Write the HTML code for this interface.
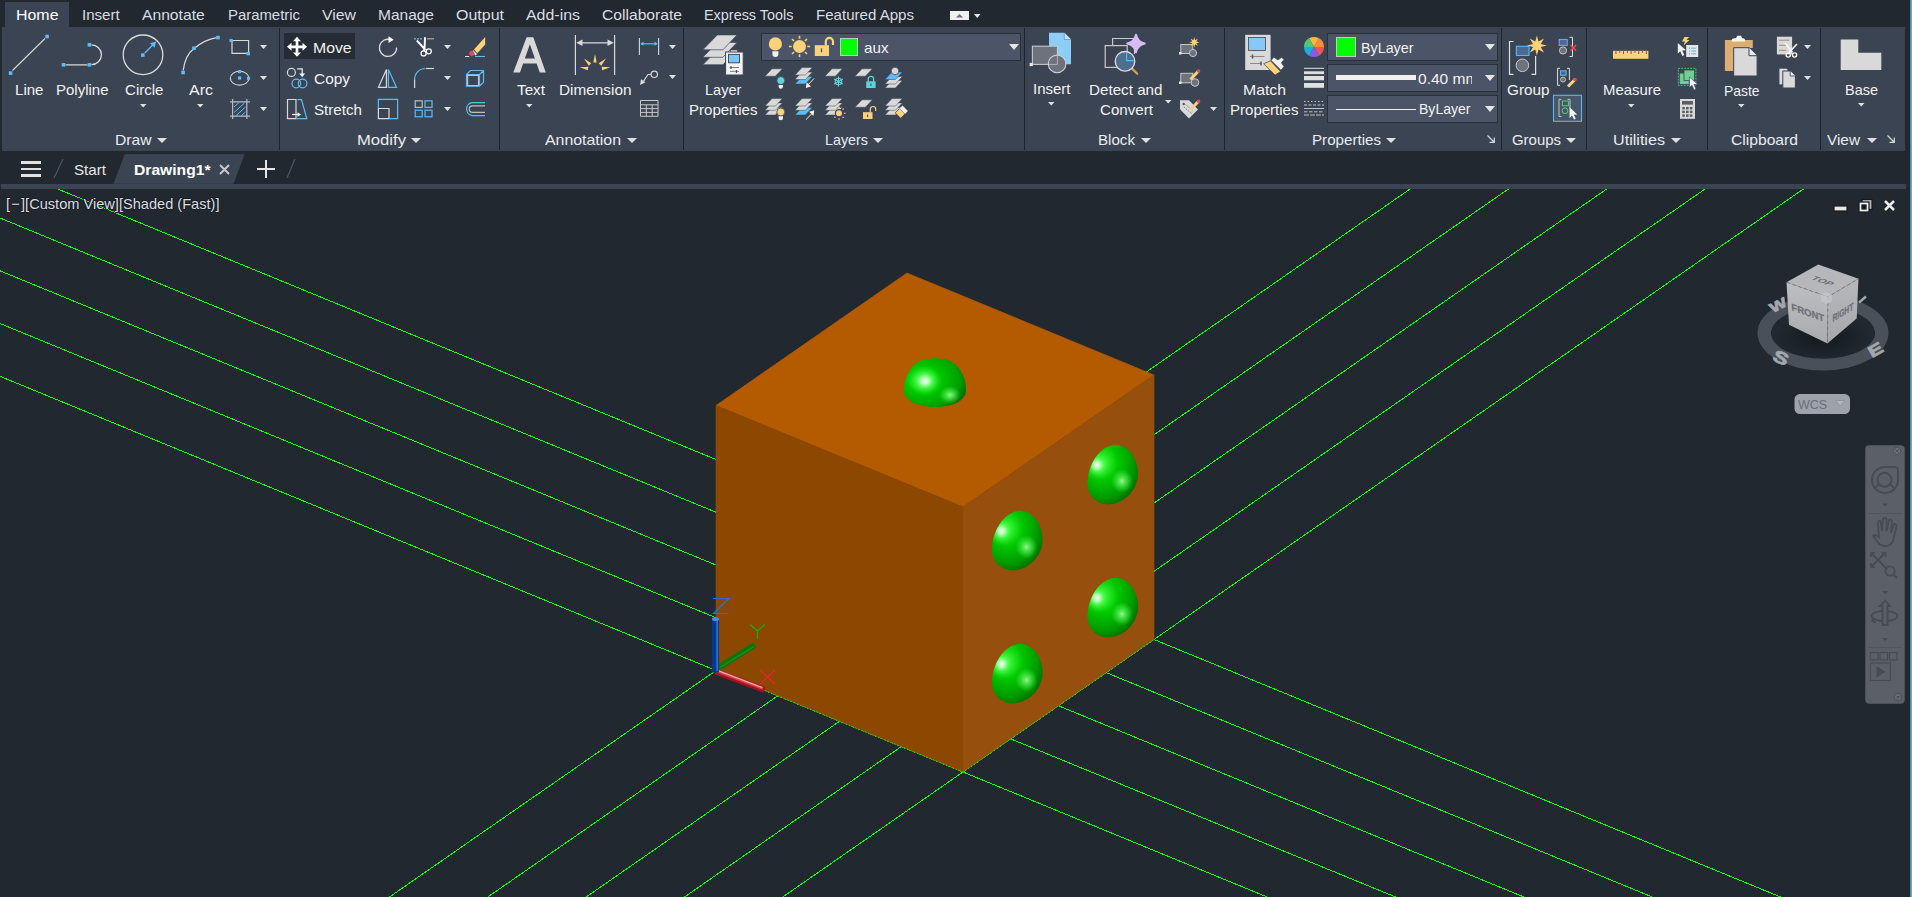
<!DOCTYPE html>
<html><head><meta charset="utf-8"><style>
html,body{margin:0;padding:0;}
body{width:1912px;height:897px;background:#212830;position:relative;overflow:hidden;font-family:"Liberation Sans", sans-serif;}
.t{position:absolute;white-space:nowrap;font-family:"Liberation Sans", sans-serif;transform-origin:0 0;}
svg{overflow:visible;}
</style></head><body>
<div style="position:absolute;left:5px;top:2px;width:64px;height:25px;background:#3b4453;"></div>
<div id="t1" class="t" style="left:16.0px;top:7.30px;font-size:15px;line-height:15px;color:#ffffff;font-weight:normal;transform:scaleX(1.0621);">Home</div>
<div id="t2" class="t" style="left:81.5px;top:7.30px;font-size:15px;line-height:15px;color:#dadde2;font-weight:normal;transform:scaleX(1.0049);">Insert</div>
<div id="t3" class="t" style="left:141.8px;top:7.30px;font-size:15px;line-height:15px;color:#dadde2;font-weight:normal;transform:scaleX(1.0439);">Annotate</div>
<div id="t4" class="t" style="left:227.5px;top:7.30px;font-size:15px;line-height:15px;color:#dadde2;font-weight:normal;transform:scaleX(0.9927);">Parametric</div>
<div id="t5" class="t" style="left:321.5px;top:7.30px;font-size:15px;line-height:15px;color:#dadde2;font-weight:normal;transform:scaleX(1.0543);">View</div>
<div id="t6" class="t" style="left:377.5px;top:7.30px;font-size:15px;line-height:15px;color:#dadde2;font-weight:normal;transform:scaleX(1.0329);">Manage</div>
<div id="t7" class="t" style="left:455.5px;top:7.30px;font-size:15px;line-height:15px;color:#dadde2;font-weight:normal;transform:scaleX(1.0659);">Output</div>
<div id="t8" class="t" style="left:525.5px;top:7.30px;font-size:15px;line-height:15px;color:#dadde2;font-weight:normal;transform:scaleX(1.0618);">Add-ins</div>
<div id="t9" class="t" style="left:601.5px;top:7.30px;font-size:15px;line-height:15px;color:#dadde2;font-weight:normal;transform:scaleX(1.0428);">Collaborate</div>
<div id="t10" class="t" style="left:704.0px;top:7.30px;font-size:15px;line-height:15px;color:#dadde2;font-weight:normal;transform:scaleX(0.9612);">Express Tools</div>
<div id="t11" class="t" style="left:815.5px;top:7.30px;font-size:15px;line-height:15px;color:#dadde2;font-weight:normal;transform:scaleX(1.0043);">Featured Apps</div>
<div style="position:absolute;left:950px;top:11px;width:19px;height:9px;background:#f0f0f0;"></div>
<svg style="position:absolute;left:954px;top:12px;" width="11" height="7" viewBox="0 0 11 7"><path d="M2 5.5L5.5 2L9 5.5Z" fill="#6a6e74"/></svg>
<svg style="position:absolute;left:973.75px;top:13.5px;" width="6.5" height="4" viewBox="0 0 6.5 4"><path d="M0 0H6.5L3.25 4Z" fill="#e6e6e6"/></svg>
<div style="position:absolute;left:2px;top:27px;width:1903px;height:124px;background:#3b4453;"></div>
<div style="position:absolute;left:279px;top:28px;width:1px;height:122px;background:#20252d;"></div>
<div style="position:absolute;left:499px;top:28px;width:1px;height:122px;background:#20252d;"></div>
<div style="position:absolute;left:683px;top:28px;width:1px;height:122px;background:#20252d;"></div>
<div style="position:absolute;left:1024px;top:28px;width:1px;height:122px;background:#20252d;"></div>
<div style="position:absolute;left:1224px;top:28px;width:1px;height:122px;background:#20252d;"></div>
<div style="position:absolute;left:1501px;top:28px;width:1px;height:122px;background:#20252d;"></div>
<div style="position:absolute;left:1586px;top:28px;width:1px;height:122px;background:#20252d;"></div>
<div style="position:absolute;left:1707px;top:28px;width:1px;height:122px;background:#20252d;"></div>
<div style="position:absolute;left:1820px;top:28px;width:1px;height:122px;background:#20252d;"></div>
<div id="t12" class="t" style="left:115.0px;top:132.30px;font-size:15px;line-height:15px;color:#e9ebee;font-weight:normal;transform:scaleX(1.0424);">Draw</div>
<svg style="position:absolute;left:157.0px;top:137.5px;" width="10" height="5" viewBox="0 0 10 5"><path d="M0 0H10L5.0 5Z" fill="#e0e0e0"/></svg>
<div id="t13" class="t" style="left:356.5px;top:132.30px;font-size:15px;line-height:15px;color:#e9ebee;font-weight:normal;transform:scaleX(1.1089);">Modify</div>
<svg style="position:absolute;left:411.0px;top:137.5px;" width="10" height="5" viewBox="0 0 10 5"><path d="M0 0H10L5.0 5Z" fill="#e0e0e0"/></svg>
<div id="t14" class="t" style="left:544.5px;top:132.30px;font-size:15px;line-height:15px;color:#e9ebee;font-weight:normal;transform:scaleX(1.0595);">Annotation</div>
<svg style="position:absolute;left:627.0px;top:137.5px;" width="10" height="5" viewBox="0 0 10 5"><path d="M0 0H10L5.0 5Z" fill="#e0e0e0"/></svg>
<div id="t15" class="t" style="left:824.5px;top:132.30px;font-size:15px;line-height:15px;color:#e9ebee;font-weight:normal;transform:scaleX(0.9549);">Layers</div>
<svg style="position:absolute;left:873.0px;top:137.5px;" width="10" height="5" viewBox="0 0 10 5"><path d="M0 0H10L5.0 5Z" fill="#e0e0e0"/></svg>
<div id="t16" class="t" style="left:1097.5px;top:132.30px;font-size:15px;line-height:15px;color:#e9ebee;font-weight:normal;transform:scaleX(1.0085);">Block</div>
<svg style="position:absolute;left:1141.0px;top:137.5px;" width="10" height="5" viewBox="0 0 10 5"><path d="M0 0H10L5.0 5Z" fill="#e0e0e0"/></svg>
<div id="t17" class="t" style="left:1311.5px;top:132.30px;font-size:15px;line-height:15px;color:#e9ebee;font-weight:normal;transform:scaleX(1.0091);">Properties</div>
<svg style="position:absolute;left:1386.0px;top:137.5px;" width="10" height="5" viewBox="0 0 10 5"><path d="M0 0H10L5.0 5Z" fill="#e0e0e0"/></svg>
<div id="t18" class="t" style="left:1511.5px;top:132.30px;font-size:15px;line-height:15px;color:#e9ebee;font-weight:normal;transform:scaleX(0.9959);">Groups</div>
<svg style="position:absolute;left:1566.0px;top:137.5px;" width="10" height="5" viewBox="0 0 10 5"><path d="M0 0H10L5.0 5Z" fill="#e0e0e0"/></svg>
<div id="t19" class="t" style="left:1612.5px;top:132.30px;font-size:15px;line-height:15px;color:#e9ebee;font-weight:normal;transform:scaleX(1.0756);">Utilities</div>
<svg style="position:absolute;left:1671.0px;top:137.5px;" width="10" height="5" viewBox="0 0 10 5"><path d="M0 0H10L5.0 5Z" fill="#e0e0e0"/></svg>
<div id="t20" class="t" style="left:1730.5px;top:132.30px;font-size:15px;line-height:15px;color:#e9ebee;font-weight:normal;transform:scaleX(1.0433);">Clipboard</div>
<div id="t21" class="t" style="left:1826.5px;top:132.30px;font-size:15px;line-height:15px;color:#e9ebee;font-weight:normal;transform:scaleX(1.0233);">View</div>
<svg style="position:absolute;left:1867.0px;top:137.5px;" width="10" height="5" viewBox="0 0 10 5"><path d="M0 0H10L5.0 5Z" fill="#e0e0e0"/></svg>
<div style="position:absolute;left:284px;top:33px;width:71px;height:26px;background:#262c36;"></div>
<div id="t22" class="t" style="left:15.0px;top:82.30px;font-size:15px;line-height:15px;color:#f2f2f2;font-weight:normal;transform:scaleX(1.0050);">Line</div>
<div id="t23" class="t" style="left:56.0px;top:82.30px;font-size:15px;line-height:15px;color:#f2f2f2;font-weight:normal;transform:scaleX(0.9994);">Polyline</div>
<div id="t24" class="t" style="left:125.0px;top:82.30px;font-size:15px;line-height:15px;color:#f2f2f2;font-weight:normal;transform:scaleX(1.0041);">Circle</div>
<div id="t25" class="t" style="left:188.5px;top:82.30px;font-size:15px;line-height:15px;color:#f2f2f2;font-weight:normal;transform:scaleX(1.0667);">Arc</div>
<div id="t26" class="t" style="left:312.9px;top:40.30px;font-size:15px;line-height:15px;color:#f2f2f2;font-weight:normal;transform:scaleX(1.0521);">Move</div>
<div id="t27" class="t" style="left:313.5px;top:71.30px;font-size:15px;line-height:15px;color:#f2f2f2;font-weight:normal;transform:scaleX(1.0277);">Copy</div>
<div id="t28" class="t" style="left:313.5px;top:102.30px;font-size:15px;line-height:15px;color:#f2f2f2;font-weight:normal;transform:scaleX(1.0099);">Stretch</div>
<div id="t29" class="t" style="left:516.5px;top:82.30px;font-size:15px;line-height:15px;color:#f2f2f2;font-weight:normal;transform:scaleX(1.0176);">Text</div>
<div id="t30" class="t" style="left:559.0px;top:82.30px;font-size:15px;line-height:15px;color:#f2f2f2;font-weight:normal;transform:scaleX(1.0229);">Dimension</div>
<div id="t31" class="t" style="left:705.1px;top:82.30px;font-size:15px;line-height:15px;color:#f2f2f2;font-weight:normal;transform:scaleX(0.9699);">Layer</div>
<div id="t32" class="t" style="left:689.0px;top:102.30px;font-size:15px;line-height:15px;color:#f2f2f2;font-weight:normal;transform:scaleX(1.0018);">Properties</div>
<div id="t33" class="t" style="left:1033.0px;top:81.30px;font-size:15px;line-height:15px;color:#f2f2f2;font-weight:normal;transform:scaleX(0.9996);">Insert</div>
<div id="t34" class="t" style="left:1089.0px;top:82.30px;font-size:15px;line-height:15px;color:#f2f2f2;font-weight:normal;transform:scaleX(1.0131);">Detect and</div>
<div id="t35" class="t" style="left:1099.5px;top:102.30px;font-size:15px;line-height:15px;color:#f2f2f2;font-weight:normal;transform:scaleX(1.0089);">Convert</div>
<div id="t36" class="t" style="left:1242.5px;top:82.30px;font-size:15px;line-height:15px;color:#f2f2f2;font-weight:normal;transform:scaleX(1.0524);">Match</div>
<div id="t37" class="t" style="left:1230.0px;top:102.30px;font-size:15px;line-height:15px;color:#f2f2f2;font-weight:normal;transform:scaleX(1.0018);">Properties</div>
<div id="t38" class="t" style="left:1507.0px;top:82.30px;font-size:15px;line-height:15px;color:#f2f2f2;font-weight:normal;transform:scaleX(1.0191);">Group</div>
<div id="t39" class="t" style="left:1602.5px;top:82.30px;font-size:15px;line-height:15px;color:#f2f2f2;font-weight:normal;transform:scaleX(0.9938);">Measure</div>
<div id="t40" class="t" style="left:1724.0px;top:83.30px;font-size:15px;line-height:15px;color:#f2f2f2;font-weight:normal;transform:scaleX(0.9255);">Paste</div>
<div id="t41" class="t" style="left:1844.5px;top:82.30px;font-size:15px;line-height:15px;color:#f2f2f2;font-weight:normal;transform:scaleX(0.9648);">Base</div>
<svg style="position:absolute;left:139.75px;top:104.2px;" width="6.5" height="3.6" viewBox="0 0 6.5 3.6"><path d="M0 0H6.5L3.25 3.6Z" fill="#e0e0e0"/></svg>
<svg style="position:absolute;left:196.75px;top:104.2px;" width="6.5" height="3.6" viewBox="0 0 6.5 3.6"><path d="M0 0H6.5L3.25 3.6Z" fill="#e0e0e0"/></svg>
<svg style="position:absolute;left:525.75px;top:104.2px;" width="6.5" height="3.6" viewBox="0 0 6.5 3.6"><path d="M0 0H6.5L3.25 3.6Z" fill="#e0e0e0"/></svg>
<svg style="position:absolute;left:1047.75px;top:102.2px;" width="6.5" height="3.6" viewBox="0 0 6.5 3.6"><path d="M0 0H6.5L3.25 3.6Z" fill="#e0e0e0"/></svg>
<svg style="position:absolute;left:1164.75px;top:100.2px;" width="6.5" height="3.6" viewBox="0 0 6.5 3.6"><path d="M0 0H6.5L3.25 3.6Z" fill="#e0e0e0"/></svg>
<svg style="position:absolute;left:1627.75px;top:104.2px;" width="6.5" height="3.6" viewBox="0 0 6.5 3.6"><path d="M0 0H6.5L3.25 3.6Z" fill="#e0e0e0"/></svg>
<svg style="position:absolute;left:1737.75px;top:104.2px;" width="6.5" height="3.6" viewBox="0 0 6.5 3.6"><path d="M0 0H6.5L3.25 3.6Z" fill="#e0e0e0"/></svg>
<svg style="position:absolute;left:1857.75px;top:103.2px;" width="6.5" height="3.6" viewBox="0 0 6.5 3.6"><path d="M0 0H6.5L3.25 3.6Z" fill="#e0e0e0"/></svg>
<svg style="position:absolute;left:259.5px;top:45.0px;" width="7" height="4" viewBox="0 0 7 4"><path d="M0 0H7L3.5 4Z" fill="#e0e0e0"/></svg>
<svg style="position:absolute;left:259.5px;top:76.0px;" width="7" height="4" viewBox="0 0 7 4"><path d="M0 0H7L3.5 4Z" fill="#e0e0e0"/></svg>
<svg style="position:absolute;left:259.5px;top:107.0px;" width="7" height="4" viewBox="0 0 7 4"><path d="M0 0H7L3.5 4Z" fill="#e0e0e0"/></svg>
<svg style="position:absolute;left:443.5px;top:45.0px;" width="7" height="4" viewBox="0 0 7 4"><path d="M0 0H7L3.5 4Z" fill="#e0e0e0"/></svg>
<svg style="position:absolute;left:443.5px;top:76.0px;" width="7" height="4" viewBox="0 0 7 4"><path d="M0 0H7L3.5 4Z" fill="#e0e0e0"/></svg>
<svg style="position:absolute;left:443.5px;top:107.0px;" width="7" height="4" viewBox="0 0 7 4"><path d="M0 0H7L3.5 4Z" fill="#e0e0e0"/></svg>
<svg style="position:absolute;left:668.5px;top:45.0px;" width="7" height="4" viewBox="0 0 7 4"><path d="M0 0H7L3.5 4Z" fill="#e0e0e0"/></svg>
<svg style="position:absolute;left:668.5px;top:75.0px;" width="7" height="4" viewBox="0 0 7 4"><path d="M0 0H7L3.5 4Z" fill="#e0e0e0"/></svg>
<svg style="position:absolute;left:1209.5px;top:107.0px;" width="7" height="4" viewBox="0 0 7 4"><path d="M0 0H7L3.5 4Z" fill="#e0e0e0"/></svg>
<svg style="position:absolute;left:1803.5px;top:45.0px;" width="7" height="4" viewBox="0 0 7 4"><path d="M0 0H7L3.5 4Z" fill="#e0e0e0"/></svg>
<svg style="position:absolute;left:1803.5px;top:76.0px;" width="7" height="4" viewBox="0 0 7 4"><path d="M0 0H7L3.5 4Z" fill="#e0e0e0"/></svg>
<div style="position:absolute;left:761px;top:33px;width:258px;height:26px;background:#4b5567;border:1px solid #2a303a;"></div>
<svg style="position:absolute;left:1009.0px;top:44.0px;" width="10" height="6" viewBox="0 0 10 6"><path d="M0 0H10L5.0 6Z" fill="#e6e6e6"/></svg>
<div style="position:absolute;left:841px;top:39px;width:16px;height:16px;background:#00ff00;outline:1px solid #c8c8c8;"></div>
<div id="t42" class="t" style="left:864.0px;top:39.80px;font-size:15px;line-height:15px;color:#f2f2f2;font-weight:normal;transform:scaleX(1.0129);">aux</div>
<div style="position:absolute;left:1327px;top:33px;width:169px;height:26px;background:#4b5567;border:1px solid #2a303a;"></div>
<div style="position:absolute;left:1327px;top:64px;width:169px;height:26px;background:#4b5567;border:1px solid #2a303a;"></div>
<div style="position:absolute;left:1327px;top:95px;width:169px;height:26px;background:#4b5567;border:1px solid #2a303a;"></div>
<svg style="position:absolute;left:1485.0px;top:44.0px;" width="10" height="6" viewBox="0 0 10 6"><path d="M0 0H10L5.0 6Z" fill="#e6e6e6"/></svg>
<svg style="position:absolute;left:1485.0px;top:75.0px;" width="10" height="6" viewBox="0 0 10 6"><path d="M0 0H10L5.0 6Z" fill="#e6e6e6"/></svg>
<svg style="position:absolute;left:1485.0px;top:106.0px;" width="10" height="6" viewBox="0 0 10 6"><path d="M0 0H10L5.0 6Z" fill="#e6e6e6"/></svg>
<div style="position:absolute;left:1337px;top:38px;width:18px;height:18px;background:#00ff00;outline:1px solid #c8c8c8;"></div>
<div id="t43" class="t" style="left:1361.0px;top:39.80px;font-size:15px;line-height:15px;color:#f2f2f2;font-weight:normal;transform:scaleX(0.9540);">ByLayer</div>
<div style="position:absolute;left:1336px;top:75px;width:80px;height:5px;background:#f0f0f0;"></div>
<div style="position:absolute;left:1417px;top:64px;width:55px;height:28px;overflow:hidden">
<div id="t44" class="t" style="left:1.0px;top:6.80px;font-size:15px;line-height:15px;color:#f2f2f2;font-weight:normal;transform:scaleX(1.0367);">0.40 mm</div>
</div>
<div style="position:absolute;left:1336px;top:109px;width:80px;height:1px;background:#f0f0f0;"></div>
<div id="t45" class="t" style="left:1419.0px;top:101.30px;font-size:15px;line-height:15px;color:#f2f2f2;font-weight:normal;transform:scaleX(0.9358);">ByLayer</div>
<svg style="position:absolute;left:0px;top:0px;" width="1912" height="151" viewBox="0 0 1912 151"><path d="M12.5 70.5L45 38.5" stroke="#d9d9d9" stroke-width="1.1" fill="none"/><rect x="8.80" y="71.30" width="3.6" height="3.6" fill="#5ebcf4"/><rect x="45.30" y="34.70" width="3.6" height="3.6" fill="#5ebcf4"/><path d="M65.5 64.8H87.5M91.5 44.8A9.9 9.9 0 0 1 91.5 64.6" stroke="#d9d9d9" stroke-width="1.3" fill="none"/><rect x="61.70" y="63.00" width="3.6" height="3.6" fill="#5ebcf4"/><rect x="87.60" y="63.00" width="3.6" height="3.6" fill="#5ebcf4"/><rect x="87.60" y="43.00" width="3.6" height="3.6" fill="#5ebcf4"/><circle cx="143" cy="54.8" r="19.8" stroke="#d9d9d9" stroke-width="1.3" fill="none"/><rect x="141.00" y="53.30" width="3.6" height="3.6" fill="#5ebcf4"/><path d="M144.8 53L152.5 45.3" stroke="#5ebcf4" stroke-width="1.3"/><path d="M156.2 41.5L150 43.2L154.5 47.7Z" fill="#5ebcf4"/><path d="M183.2 70.5C184.5 60 188 53 194 48.5C200 43.5 208 39 216.5 37.6" stroke="#d9d9d9" stroke-width="1.3" fill="none"/><rect x="181.30" y="70.70" width="3.6" height="3.6" fill="#5ebcf4"/><rect x="192.20" y="46.50" width="3.6" height="3.6" fill="#5ebcf4"/><rect x="216.20" y="35.80" width="3.6" height="3.6" fill="#5ebcf4"/><path d="M232 40.5H248.6V53.4H232Z" stroke="#d9d9d9" stroke-width="1.2" fill="none"/><rect x="229.50" y="38.90" width="3.2" height="3.2" fill="#5ebcf4"/><rect x="246.60" y="51.90" width="3.4" height="3.4" fill="#5ebcf4"/><ellipse cx="239.6" cy="78.2" rx="9.3" ry="6.9" stroke="#d9d9d9" stroke-width="1.1" fill="none"/><rect x="238.00" y="70.00" width="3.2" height="3.2" fill="#5ebcf4"/><rect x="238.00" y="76.40" width="3.2" height="3.2" fill="#5ebcf4"/><rect x="246.90" y="76.70" width="3.2" height="3.2" fill="#5ebcf4"/><path d="M232.6 99V119M246.8 99V119M230 101.8H250M230 116.2H250" stroke="#b8bcc2" stroke-width="1.2" fill="none"/><path d="M234 107L239 102.5M234 112.5L244.5 103M235.5 116L245.5 107M241 116L245.5 112" stroke="#5ebcf4" stroke-width="1" fill="none"/><path d="M297 36.8L301 41.2H298.3V45.5H302.5V42.8L307 46.8L302.5 50.8V48.2H298.3V52.4H301L297 56.8L293 52.4H295.7V48.2H291.5V50.8L287 46.8L291.5 42.8V45.5H295.7V41.2H293Z" fill="#ffffff"/><circle cx="291.4" cy="72.4" r="4" stroke="#d9d9d9" stroke-width="1.2" fill="none"/><path d="M297.2 68.8H302.2V74" stroke="#e8e8e8" stroke-width="1.3" fill="none"/><path d="M299.3 73.5H305.1L302.2 77.2Z" fill="#ffffff"/><circle cx="296.3" cy="83.5" r="4.3" stroke="#5ebcf4" stroke-width="1.2" fill="none"/><circle cx="302.6" cy="83.5" r="4.3" stroke="#5ebcf4" stroke-width="1.2" fill="none"/><path d="M287.5 99.5H296V118.6H287.5Z" stroke="#d9d9d9" stroke-width="1.2" fill="none"/><path d="M297.5 99.6H301.5L306.8 118.6H296.5" stroke="#5ebcf4" stroke-width="1.2" fill="none"/><path d="M292 114.5H298.5" stroke="#e8e8e8" stroke-width="1.2"/><path d="M297.5 112.2L301 114.5L297.5 116.8Z" fill="#ffffff"/><path d="M391 39.8A8.6 8.6 0 1 0 396.6 47.5" stroke="#d9d9d9" stroke-width="1.3" fill="none"/><path d="M388.5 36.3L393.7 39.7L388.5 42.9Z" fill="#ffffff"/><path d="M414 38.8H422.5" stroke="#5ebcf4" stroke-width="1.2" stroke-dasharray="2 1"/><path d="M427 38.8H434" stroke="#a8a8a8" stroke-width="1.2"/><path d="M416.8 40.5L425.5 49.8M425 37.3L424.6 47.5L423.8 51" stroke="#ffffff" stroke-width="1.9" fill="none"/><circle cx="423.6" cy="53.4" r="2.5" stroke="#ffffff" stroke-width="1.3" fill="none"/><circle cx="428.8" cy="51.3" r="2.5" stroke="#ffffff" stroke-width="1.3" fill="none"/><path d="M474 49.5L485.2 37V44.5L477.3 53.2Z" fill="#f9d27a"/><path d="M472.5 51L476.2 54.8" stroke="#ffffff" stroke-width="2"/><circle cx="471.8" cy="53.3" r="2.6" fill="#e8495a"/><path d="M465 56.5H469.2" stroke="#e8e8e8" stroke-width="1"/><path d="M475 56.5H485" stroke="#5ebcf4" stroke-width="1.1"/><path d="M378.5 87.3L386.4 69.5V87.3Z" stroke="#d9d9d9" stroke-width="1.2" fill="none"/><path d="M388.4 69.5L396.5 87.3H388.4Z" stroke="#5ebcf4" stroke-width="1.2" fill="none"/><path d="M414.6 88V79.5" stroke="#d9d9d9" stroke-width="1.2" fill="none"/><path d="M414.6 80A11 11 0 0 1 425.5 68.5" stroke="#5ebcf4" stroke-width="1.2" fill="none"/><path d="M426 68.5H434" stroke="#d9d9d9" stroke-width="1.2"/><path d="M466.5 86.2V74.5L470.5 70.5H483.5V82.2L479.5 86.2Z M466.5 74.5H479.5V86.2 M479.5 74.5L483.5 70.5" stroke="#5ebcf4" stroke-width="1.2" fill="none"/><path d="M467.6 75.3H478.5V85.6H467.6Z" stroke="#bfbfbf" stroke-width="1.2" fill="none"/><path d="M378.4 108V99.4H397.6V118.6H389.5" stroke="#5ebcf4" stroke-width="1.2" fill="none"/><path d="M378.4 108.5H389V118.6H378.4Z" stroke="#d9d9d9" stroke-width="1.2" fill="none"/><rect x="415.2" y="100.8" width="7" height="6.6" stroke="#bfbfbf" stroke-width="1.2" fill="none"/><rect x="425" y="100.8" width="7" height="6.6" stroke="#5ebcf4" stroke-width="1.2" fill="none"/><rect x="415.2" y="110.2" width="7" height="6.6" stroke="#5ebcf4" stroke-width="1.2" fill="none"/><rect x="425" y="110.2" width="7" height="6.6" stroke="#5ebcf4" stroke-width="1.2" fill="none"/><path d="M485 102.6H472A6.6 6.6 0 0 0 472 115.6H485" stroke="#5ebcf4" stroke-width="1.2" fill="none"/><path d="M485 105.8H472.5A3.3 3.3 0 0 0 472.5 112.4H485" stroke="#bfbfbf" stroke-width="1.2" fill="none"/><path fill-rule="evenodd" d="M513.3 72.4L526.6 37.2H533.3L545.8 72.4H539.8L536.6 63.4H523.1L520 72.4Z M524.8 58.5H534.9L529.9 44.2Z" fill="#d9d9d9"/><path d="M575.4 35V75M614.6 35V75M580 42.8H610" stroke="#d9d9d9" stroke-width="1.2" fill="none"/><path d="M576.2 42.8L582.5 39.6V46Z M613.8 42.8L607.5 39.6V46Z" fill="#d9d9d9"/><path d="M595.00 54.00L596.70 62.50L593.30 62.50Z" fill="#f9d27a"/><path d="M584.04 58.54L591.25 63.35L588.85 65.75Z" fill="#f9d27a"/><path d="M605.96 58.54L601.15 65.75L598.75 63.35Z" fill="#f9d27a"/><path d="M579.65 67.34L588.30 66.84L587.83 70.21Z" fill="#f9d27a"/><path d="M610.35 67.34L602.17 70.21L601.70 66.84Z" fill="#f9d27a"/><path d="M639.4 38V55M658.6 38V55" stroke="#d9d9d9" stroke-width="1.1"/><path d="M641 43.8H657" stroke="#5ebcf4" stroke-width="1.2"/><path d="M640.2 43.8L643.5 41.8V45.8Z M657.8 43.8L654.5 41.8V45.8Z" fill="#5ebcf4"/><circle cx="654.3" cy="74.3" r="3.2" stroke="#d9d9d9" stroke-width="1.2" fill="none"/><path d="M651 74.5H648L643 82" stroke="#d9d9d9" stroke-width="1.2" fill="none"/><path d="M640 85L641 79.2L645.5 82.2Z" fill="#d9d9d9"/><path d="M640.5 100.5H658V116.3H640.5Z M640.5 104.8H658 M640.5 108.6H658 M640.5 112.4H658 M646.3 104.8V116.3 M652.2 104.8V116.3" stroke="#c8c8c8" stroke-width="1" fill="none"/><path d="M702.8 64.8L717.3 49.9H737.1L722.9 64.8Z" fill="#d9d9d9" stroke="#3b4453" stroke-width="0.7"/><path d="M702.8 57.3L717.3 42.4H737.1L722.9 57.3Z" fill="#d9d9d9" stroke="#3b4453" stroke-width="0.7"/><path d="M702.8 49.8L717.3 34.9H737.1L722.9 49.8Z" fill="#d9d9d9" stroke="#3b4453" stroke-width="0.7"/><rect x="730.5" y="50" width="7" height="3" fill="#e8e8e8" stroke="#3b4453" stroke-width="0.6"/><rect x="725.6" y="52" width="17.6" height="23" fill="#f2f2f2" stroke="#3b4453" stroke-width="1"/><rect x="728.5" y="54.4" width="11" height="8.4" fill="#7cc4fb" stroke="#3a404a" stroke-width="0.9"/><path d="M729.5 67.5H739M730 71.4H739" stroke="#707070" stroke-width="0.9"/><path d="M731 66V69M736.5 70V73" stroke="#505050" stroke-width="1.2"/><circle cx="775.4" cy="43.9" r="6.6" fill="#f9d27a"/><path d="M772.4 51.2H778.4V54A3 3 0 0 1 772.4 54Z" fill="#f0f0f0"/><circle cx="799.5" cy="46.5" r="6.5" fill="#f9d27a"/><path d="M807.30 46.50L810.10 46.50" stroke="#f9d27a" stroke-width="1.6"/><path d="M805.02 52.02L807.00 54.00" stroke="#f9d27a" stroke-width="1.6"/><path d="M799.50 54.30L799.50 57.10" stroke="#f9d27a" stroke-width="1.6"/><path d="M793.98 52.02L792.00 54.00" stroke="#f9d27a" stroke-width="1.6"/><path d="M791.70 46.50L788.90 46.50" stroke="#f9d27a" stroke-width="1.6"/><path d="M793.98 40.98L792.00 39.00" stroke="#f9d27a" stroke-width="1.6"/><path d="M799.50 38.70L799.50 35.90" stroke="#f9d27a" stroke-width="1.6"/><path d="M805.02 40.98L807.00 39.00" stroke="#f9d27a" stroke-width="1.6"/><path d="M814.8 45.2H829V56H814.8Z" fill="#f9d27a"/><path d="M825.8 45.5V41.5A3.6 3.6 0 0 1 833 41.5V45" stroke="#f9d27a" stroke-width="2.2" fill="none"/><path d="M821.5 48.3V52.2" stroke="#4c576a" stroke-width="1.3"/><path d="M765 76.2L772 68.8H782.4L775.4 76.2Z" fill="#d9d9d9" stroke="#3b4453" stroke-width="0.5"/><circle cx="780.8" cy="80.6" r="4" fill="#5fd3dc" stroke="#3b4453" stroke-width="0.8"/><path d="M778.5999999999999 84.89999999999999H783.0V86.6A2.2 2.2 0 0 1 778.5999999999999 86.6Z" fill="#f0f0f0"/><path d="M795 84L802 76.6H812.4L805.4 84Z" fill="#5ebcf4" stroke="#3b4453" stroke-width="0.5"/><path d="M795 79.5L802 72.1H812.4L805.4 79.5Z" fill="#d9d9d9" stroke="#3b4453" stroke-width="0.5"/><path d="M795 75L802 67.6H812.4L805.4 75Z" fill="#d9d9d9" stroke="#3b4453" stroke-width="0.5"/><path d="M814 78.5L808.2 84.6" stroke="#f0f0f0" stroke-width="1"/><path d="M805.8 88L806.6 82.3L811 86.5Z" fill="#f0f0f0"/><path d="M825 76.2L832 68.8H842.4L835.4 76.2Z" fill="#d9d9d9" stroke="#3b4453" stroke-width="0.5"/><g stroke="#5fd3dc" stroke-width="1.1"><path d="M838.5 76.5V86.5M834.2 79L842.8 84M834.2 84L842.8 79"/><circle cx="838.5" cy="81.5" r="3.3" fill="none"/></g><path d="M855 76.2L862 68.8H872.4L865.4 76.2Z" fill="#d9d9d9" stroke="#3b4453" stroke-width="0.5"/><path d="M866.2 81.3H875.6V88H866.2Z" fill="#5fd3dc"/><path d="M868.2 81.5V79A2.7 2.7 0 0 1 873.6 79V81.5" stroke="#5fd3dc" stroke-width="1.3" fill="none"/><path d="M870.9 83.5V86" stroke="#3b4453" stroke-width="1"/><path d="M885 88L892 80.6H902.4L895.4 88Z" fill="#d9d9d9" stroke="#3b4453" stroke-width="0.5"/><path d="M885 84L892 76.6H902.4L895.4 84Z" fill="#d9d9d9" stroke="#3b4453" stroke-width="0.5"/><path d="M885 79.5L892 72.1H902.4L895.4 79.5Z" fill="#5ebcf4" stroke="#3b4453" stroke-width="0.5"/><circle cx="895" cy="71" r="3.8" fill="#d9d9d9" stroke="#3b4453" stroke-width="0.8"/><path d="M765 115L772 107.6H782.4L775.4 115Z" fill="#d9d9d9" stroke="#3b4453" stroke-width="0.5"/><path d="M765 110.3L772 102.89999999999999H782.4L775.4 110.3Z" fill="#d9d9d9" stroke="#3b4453" stroke-width="0.5"/><path d="M765 106L772 98.6H782.4L775.4 106Z" fill="#d9d9d9" stroke="#3b4453" stroke-width="0.5"/><circle cx="780.8" cy="112" r="4" fill="#f9d27a" stroke="#3b4453" stroke-width="0.8"/><path d="M778.5999999999999 116.3H783.0V118A2.2 2.2 0 0 1 778.5999999999999 118Z" fill="#f0f0f0"/><path d="M795 115L802 107.6H812.4L805.4 115Z" fill="#5ebcf4" stroke="#3b4453" stroke-width="0.5"/><path d="M795 110.3L802 102.89999999999999H812.4L805.4 110.3Z" fill="#d9d9d9" stroke="#3b4453" stroke-width="0.5"/><path d="M795 106L802 98.6H812.4L805.4 106Z" fill="#d9d9d9" stroke="#3b4453" stroke-width="0.5"/><path d="M806 119.5L812 113.6" stroke="#f0f0f0" stroke-width="1"/><path d="M814.3 110.3L813.5 116L809.1 111.8Z" fill="#f0f0f0"/><path d="M825 115L832 107.6H842.4L835.4 115Z" fill="#d9d9d9" stroke="#3b4453" stroke-width="0.5"/><path d="M825 110.3L832 102.89999999999999H842.4L835.4 110.3Z" fill="#d9d9d9" stroke="#3b4453" stroke-width="0.5"/><path d="M825 106L832 98.6H842.4L835.4 106Z" fill="#d9d9d9" stroke="#3b4453" stroke-width="0.5"/><circle cx="839" cy="113.2" r="3.6" fill="#f9d27a" stroke="#3b4453" stroke-width="1.2"/><circle cx="844.80" cy="113.20" r="0.8" fill="#f9d27a"/><circle cx="843.10" cy="117.30" r="0.8" fill="#f9d27a"/><circle cx="839.00" cy="119.00" r="0.8" fill="#f9d27a"/><circle cx="834.90" cy="117.30" r="0.8" fill="#f9d27a"/><circle cx="833.20" cy="113.20" r="0.8" fill="#f9d27a"/><circle cx="834.90" cy="109.10" r="0.8" fill="#f9d27a"/><circle cx="839.00" cy="107.40" r="0.8" fill="#f9d27a"/><circle cx="843.10" cy="109.10" r="0.8" fill="#f9d27a"/><path d="M855 107.2L862 99.8H872.4L865.4 107.2Z" fill="#d9d9d9" stroke="#3b4453" stroke-width="0.5"/><path d="M863 112.2H872.5V119H863Z" fill="#f9d27a"/><path d="M870.3 112.3V109.2A2.7 2.7 0 0 1 875.7 109.2V111" stroke="#f9d27a" stroke-width="1.2" fill="none"/><path d="M867.6 114.5V117" stroke="#3b4453" stroke-width="1"/><path d="M885 115L892 107.6H902.4L895.4 115Z" fill="#d9d9d9" stroke="#3b4453" stroke-width="0.5"/><path d="M885 110.3L892 102.89999999999999H902.4L895.4 110.3Z" fill="#d9d9d9" stroke="#3b4453" stroke-width="0.5"/><path d="M885 106L892 98.6H902.4L895.4 106Z" fill="#d9d9d9" stroke="#3b4453" stroke-width="0.5"/><path d="M895.2 112.8L899.5 108.5L905 114L900.7 118.3Z" fill="#f9d27a" stroke="#3b4453" stroke-width="0.8"/><path d="M899.5 108.5L902.5 105.5L907.8 111L905 114Z" fill="#f0f0f0"/><path d="M1049 32.8H1064.5L1071 39.3V64.2H1049Z" fill="#8bcdfb"/><path d="M1064.3 32.8V39.5H1071" fill="#c0e4fd" stroke="#5a7c98" stroke-width="0.6"/><rect x="1032.4" y="46.2" width="25" height="18.2" fill="#6d727d" stroke="#c8c8c8" stroke-width="1.1"/><circle cx="1057.1" cy="63.9" r="8.8" fill="#6d727d" stroke="#d0d0d0" stroke-width="1.1"/><path d="M1049 64.4H1057.4V55" stroke="#b8b8b8" stroke-width="0.9" fill="none"/><rect x="1029.6" y="62.9" width="3.2" height="3.2" fill="#e8e8e8"/><path d="M1112.6 54V38.5H1134.5V54" stroke="#c8c8c8" stroke-width="1.2" fill="none"/><rect x="1105.2" y="45.6" width="22" height="21.8" fill="#3d4250" stroke="#c8c8c8" stroke-width="1.2"/><path d="M1132 68.5L1137.2 73.8" stroke="#e0a050" stroke-width="2.2" stroke-linecap="round"/><circle cx="1125" cy="61.3" r="9.8" fill="#4e6e90" stroke="#e0e0e0" stroke-width="1.3"/><path d="M1126.6 52.2V60.6H1133.8" stroke="#5ab8f0" stroke-width="1.1" fill="none"/><path d="M1136 34.7Q1137.5 42 1144.8 43.5Q1137.5 45 1136 52.3Q1134.5 45 1127.2 43.5Q1134.5 42 1136 34.7Z" fill="#d8bbf2" stroke="#d8bbf2" stroke-width="2" stroke-linejoin="round"/><rect x="1180.8" y="44.5" width="12" height="9" fill="#6d727d" stroke="#c8c8c8" stroke-width="1"/><circle cx="1193" cy="53" r="3.6" fill="#6d727d" stroke="#c8c8c8" stroke-width="1"/><rect x="1179" y="52" width="2.5" height="2.5" fill="#e8e8e8"/><path d="M1194.30 37.10L1195.14 40.27L1197.98 38.62L1196.33 41.46L1199.50 42.30L1196.33 43.14L1197.98 45.98L1195.14 44.33L1194.30 47.50L1193.46 44.33L1190.62 45.98L1192.27 43.14L1189.10 42.30L1192.27 41.46L1190.62 38.62L1193.46 40.27Z" fill="#f9d27a"/><rect x="1180.8" y="73.3" width="12" height="9.5" fill="#6d727d" stroke="#c8c8c8" stroke-width="1"/><circle cx="1195" cy="82.5" r="3.8" fill="#6d727d" stroke="#c8c8c8" stroke-width="1"/><rect x="1179" y="81.5" width="2.5" height="2.5" fill="#e8e8e8"/><path d="M1190.5 79.5L1198.5 71" stroke="#f9d27a" stroke-width="3"/><circle cx="1198.5" cy="71" r="1.8" fill="#e8495a"/><path d="M1190.5 79.5L1191.0 77.0L1193.0 79.0Z" fill="#d0d0d0"/><path d="M1180 100.3H1189L1198 109.5L1189 118.5L1180 109.3Z" fill="#d9d9d9"/><circle cx="1183.7" cy="104" r="1.2" fill="#505560"/><path d="M1184 107L1192 114M1185.5 104.5L1193 111" stroke="#6a6f78" stroke-width="0.8" stroke-dasharray="1.5 1"/><path d="M1190.5 109.8L1198.5 101.3" stroke="#f9d27a" stroke-width="3"/><circle cx="1198.5" cy="101.3" r="1.8" fill="#e8495a"/><path d="M1190.5 109.8L1191.0 107.3L1193.0 109.3Z" fill="#d0d0d0"/><rect x="1245.2" y="34.8" width="25.4" height="35.2" fill="#d9d9d9"/><rect x="1248.5" y="37.5" width="17" height="13" fill="#86c8fa" stroke="#40464e" stroke-width="0.8"/><path d="M1250 56.5H1264.5M1250 63.5H1262" stroke="#8a8a8a" stroke-width="1"/><path d="M1252.5 54.5V58.5M1261 61.5V65.5" stroke="#5a5a5a" stroke-width="1.5"/><path d="M1271 60.3L1274 57.2L1278 60L1281.6 57.2L1284 59.7L1281.4 62.8L1284 66.6L1281 70.2Z" fill="#f0f0f0" stroke="#3b4453" stroke-width="0.7"/><path d="M1263.7 63.7L1270.5 60.8L1280.6 71.6L1275 75Z" fill="#f9d27a" stroke="#3b4453" stroke-width="0.7"/><path d="M1314 47L1309.00 38.34A10 10 0 0 1 1319.00 38.34Z" fill="#f9b83a"/><path d="M1314 47L1319.00 38.34A10 10 0 0 1 1324.00 47.00Z" fill="#f98b3a"/><path d="M1314 47L1324.00 47.00A10 10 0 0 1 1319.00 55.66Z" fill="#e8565a"/><path d="M1314 47L1319.00 55.66A10 10 0 0 1 1309.00 55.66Z" fill="#8a5af0"/><path d="M1314 47L1309.00 55.66A10 10 0 0 1 1304.00 47.00Z" fill="#1aaed8"/><path d="M1314 47L1304.00 47.00A10 10 0 0 1 1309.00 38.34Z" fill="#4ec878"/><path d="M1304 68.3H1324" stroke="#e0e0e0" stroke-width="1"/><rect x="1304" y="71.3" width="20" height="2.8" fill="#e0e0e0"/><rect x="1304" y="76" width="20" height="4.3" fill="#e0e0e0"/><rect x="1304" y="83" width="20" height="4.8" fill="#e0e0e0"/><g stroke="#d0d0d0" stroke-width="0.9"><path d="M1304 101.5H1324" stroke-dasharray="1.5 2"/><path d="M1304 105H1324" stroke-dasharray="3 1.5"/><path d="M1304 108.5H1324"/><path d="M1304 111.8H1324" stroke-dasharray="3.5 1.5"/><path d="M1304 115H1324" stroke-dasharray="5 1"/></g><path d="M1513.5 41.5H1509.5V74.3H1513.5M1531.5 74.3H1535.6V56" stroke="#e0e0e0" stroke-width="1.2" fill="none"/><rect x="1516.4" y="46.3" width="12.6" height="9.2" fill="#4a6a90" stroke="#5ab8f0" stroke-width="1.1"/><circle cx="1522.4" cy="65.3" r="6.3" fill="#6d727d" stroke="#c8c8c8" stroke-width="1"/><path d="M1536.90 35.50L1538.51 41.62L1543.97 38.43L1540.78 43.89L1546.90 45.50L1540.78 47.11L1543.97 52.57L1538.51 49.38L1536.90 55.50L1535.29 49.38L1529.83 52.57L1533.02 47.11L1526.90 45.50L1533.02 43.89L1529.83 38.43L1535.29 41.62Z" fill="#f9d27a"/><path d="M1569.5 37.3H1572.5V56.5H1569.5" stroke="#e0e0e0" stroke-width="1" fill="none"/><rect x="1559.2" y="39.4" width="8" height="6" fill="#4a6a90" stroke="#5ab8f0" stroke-width="1"/><circle cx="1563" cy="50.5" r="3.6" fill="#6d727d" stroke="#c8c8c8" stroke-width="1"/><path d="M1570.6 45L1576 50.8M1576 45L1570.6 50.8" stroke="#f04848" stroke-width="1.6"/><path d="M1560 68.3H1557.6V85.3H1560M1567 68.3H1569.4V80" stroke="#e0e0e0" stroke-width="1" fill="none"/><rect x="1560.5" y="70.8" width="5.6" height="4.5" fill="#4a6a90" stroke="#5ab8f0" stroke-width="1"/><circle cx="1563" cy="79.6" r="2.5" fill="#6d727d" stroke="#c8c8c8" stroke-width="0.9"/><path d="M1568 86.5L1575 79.5" stroke="#f9d27a" stroke-width="3"/><circle cx="1575" cy="79.5" r="1.8" fill="#e8495a"/><path d="M1568 86.5L1568.5 84.0L1570.5 86.0Z" fill="#d0d0d0"/><rect x="1553.5" y="95.3" width="28" height="26" fill="#475669" stroke="#5ab8f0" stroke-width="1.1"/><path d="M1561.5 99.3H1559V116.5H1561.5M1567.5 99.3H1570V108" stroke="#c0c0c0" stroke-width="1" fill="none"/><rect x="1562.4" y="101" width="6" height="4.8" fill="none" stroke="#58d078" stroke-width="1"/><circle cx="1565" cy="110.8" r="2.9" fill="none" stroke="#58d078" stroke-width="1"/><path d="M1569.5 107L1569.5 118L1572 115.5L1574 119.5L1575.8 118.6L1573.8 114.8L1577.2 114.5Z" fill="#f0f0f0"/><rect x="1613" y="50.8" width="35.4" height="8" fill="#f9d27a"/><rect x="1615.50" y="50.8" width="0.9" height="3.2" fill="#6a5a30"/><rect x="1619.30" y="50.8" width="0.9" height="2" fill="#6a5a30"/><rect x="1623.10" y="50.8" width="0.9" height="3.2" fill="#6a5a30"/><rect x="1626.90" y="50.8" width="0.9" height="2" fill="#6a5a30"/><rect x="1630.70" y="50.8" width="0.9" height="3.2" fill="#6a5a30"/><rect x="1634.50" y="50.8" width="0.9" height="2" fill="#6a5a30"/><rect x="1638.30" y="50.8" width="0.9" height="3.2" fill="#6a5a30"/><rect x="1642.10" y="50.8" width="0.9" height="2" fill="#6a5a30"/><rect x="1645.90" y="50.8" width="0.9" height="3.2" fill="#6a5a30"/><rect x="1686.2" y="45" width="12" height="12" fill="#e6e6e6"/><path d="M1689 48.2H1689.8M1689 51H1689.8M1689 53.8H1689.8" stroke="#3a8ee6" stroke-width="1.2"/><path d="M1691.2 48.2H1696M1691.2 51H1696M1691.2 53.8H1696" stroke="#5aa8f0" stroke-width="0.9"/><path d="M1684.5 37L1682 41.5H1685L1683.5 45.5L1689.5 40H1686.5L1689 37Z" fill="#f9d27a"/><path d="M1677.8 43L1677.8 53.5L1680.3 51.3L1682.3 56L1684.3 55L1682.3 50.5L1686 50.3Z" fill="#f0f0f0"/><rect x="1678.3" y="68.3" width="17.6" height="17" fill="none" stroke="#4ec878" stroke-width="1" stroke-dasharray="1.8 1.2"/><rect x="1679.8" y="73.5" width="9" height="10.5" fill="#6ed090"/><rect x="1684" y="70" width="10.5" height="10.5" fill="#6ed090" stroke="#3b4453" stroke-width="0.8"/><path d="M1689.5 77L1689.5 87.5L1692 85.3L1694 90L1696 89L1694 84.5L1697.7 84.3Z" fill="#f0f0f0" stroke="#3b4453" stroke-width="0.6"/><rect x="1680" y="99" width="15" height="19.8" fill="#d9d9d9"/><rect x="1682" y="101" width="11" height="3.6" fill="#5a5e66"/><rect x="1682.2" y="107.0" width="2.6" height="2.4" fill="#5a5e66"/><rect x="1686.0" y="107.0" width="2.6" height="2.4" fill="#5a5e66"/><rect x="1689.8" y="107.0" width="2.6" height="2.4" fill="#5a5e66"/><rect x="1682.2" y="110.7" width="2.6" height="2.4" fill="#5a5e66"/><rect x="1686.0" y="110.7" width="2.6" height="2.4" fill="#5a5e66"/><rect x="1689.8" y="110.7" width="2.6" height="2.4" fill="#5a5e66"/><rect x="1682.2" y="114.4" width="2.6" height="2.4" fill="#5a5e66"/><rect x="1686.0" y="114.4" width="2.6" height="2.4" fill="#5a5e66"/><rect x="1689.8" y="114.4" width="2.6" height="2.4" fill="#5a5e66"/><path d="M1724.9 40H1752.8V48H1733.7V71H1724.9Z" fill="#dcae72"/><path d="M1731.8 41.5V39.8Q1731.8 38.3 1734.5 38.3H1736L1737.2 35.7H1741L1742.2 38.3H1743Q1745 38.3 1745 39.8V41.5Z" fill="#f5f5f5"/><path d="M1733.7 47.7H1749.3L1757.1 55.5V76H1733.7Z" fill="#d9d9d9" stroke="#3b4453" stroke-width="1"/><path d="M1749 47.7V55.7H1757" fill="#ececec" stroke="#3b4453" stroke-width="1"/><rect x="1776.9" y="36.7" width="15.2" height="17.7" fill="#d9d9d9"/><path d="M1779 40.2H1789M1779 45.3H1786M1779 50.3H1786" stroke="#8a7a60" stroke-width="0.8"/><path d="M1785.2 43L1792.5 52.5M1797 44L1789 52.5" stroke="#f5f5f5" stroke-width="1.7" fill="none"/><circle cx="1788.2" cy="55" r="2.1" fill="none" stroke="#f5f5f5" stroke-width="1.4"/><circle cx="1794.6" cy="55" r="2.1" fill="none" stroke="#f5f5f5" stroke-width="1.4"/><path d="M1779 68.2H1786.5L1788 69.7V84.8H1779Z" fill="#d9d9d9" stroke="#3b4453" stroke-width="0.8"/><path d="M1782.8 71H1790.5L1795.4 75.8V88H1782.8Z" fill="#d9d9d9" stroke="#3b4453" stroke-width="1"/><path d="M1790.2 71V76H1795.4" fill="#ececec" stroke="#3b4453" stroke-width="0.8"/><path d="M1840.7 39.6H1858.3V52.8H1881.3V70.1H1840.7Z" fill="#d9d9d9"/></svg>
<svg style="position:absolute;left:1486px;top:134px;" width="10" height="10" viewBox="0 0 10 10"><path d="M1.5 1.5L8 8M3.5 8.3H8.3V3.5" stroke="#d8d8d8" stroke-width="1.2" fill="none"/></svg>
<svg style="position:absolute;left:1886px;top:134px;" width="10" height="10" viewBox="0 0 10 10"><path d="M1.5 1.5L8 8M3.5 8.3H8.3V3.5" stroke="#d8d8d8" stroke-width="1.2" fill="none"/></svg>
<svg style="position:absolute;left:0px;top:151px;" width="1912" height="33" viewBox="0 0 1912 33"><path d="M124.7 3.2H244.7L233.5 32.8H113.5Z" fill="#3b4453"/></svg>
<div style="position:absolute;left:21px;top:161.3px;width:20px;height:2.8px;background:#e2e2e2;"></div>
<div style="position:absolute;left:21px;top:167.7px;width:20px;height:2.8px;background:#e2e2e2;"></div>
<div style="position:absolute;left:21px;top:174.2px;width:20px;height:2.8px;background:#e2e2e2;"></div>
<svg style="position:absolute;left:0px;top:151px;" width="400" height="33" viewBox="0 0 400 33"><path d="M54 27L63 8M287 27L295 8" stroke="#4d5666" stroke-width="1.2"/></svg>
<div id="t46" class="t" style="left:73.5px;top:162.30px;font-size:15px;line-height:15px;color:#e6e6e6;font-weight:normal;transform:scaleX(1.0099);">Start</div>
<div id="t47" class="t" style="left:134.0px;top:162.30px;font-size:15px;line-height:15px;color:#ffffff;font-weight:bold;transform:scaleX(1.0428);">Drawing1*</div>
<svg style="position:absolute;left:219px;top:164px;" width="11" height="11" viewBox="0 0 11 11"><path d="M1 1L10 10M10 1L1 10" stroke="#c8c8c8" stroke-width="2"/></svg>
<svg style="position:absolute;left:257px;top:160px;" width="18" height="18" viewBox="0 0 18 18"><path d="M9 0V18M0 9H18" stroke="#e6e6e6" stroke-width="2"/></svg>
<div style="position:absolute;left:1px;top:184px;width:1905px;height:5px;background:#3b4453;"></div>
<svg style="position:absolute;left:0px;top:189px;" width="1910" height="708" viewBox="0 0 1910 708"><g stroke="#00ff00" stroke-width="1" shape-rendering="crispEdges"><line x1="0.0" y1="187.3" x2="1267.2" y2="708.0"/><line x1="389.5" y1="708.0" x2="1410.1" y2="0.0"/><line x1="0.0" y1="134.5" x2="1395.5" y2="708.0"/><line x1="487.8" y1="708.0" x2="1508.4" y2="0.0"/><line x1="0.0" y1="81.8" x2="1523.9" y2="708.0"/><line x1="586.2" y1="708.0" x2="1606.7" y2="0.0"/><line x1="0.0" y1="29.0" x2="1652.3" y2="708.0"/><line x1="684.5" y1="708.0" x2="1705.1" y2="0.0"/><line x1="57.7" y1="0.0" x2="1780.6" y2="708.0"/><line x1="782.8" y1="708.0" x2="1803.4" y2="0.0"/></g><path d="M907.0 84.0 L1154.0 186.0 L963.0 318.0 L716.0 216.5Z" fill="#b45a00" stroke="#b45a00" stroke-width="0.7"/><path d="M716.0 216.5 L963.0 318.0 L963.0 583.0 L716.0 481.5Z" fill="#8c4800" stroke="#8c4800" stroke-width="0.7"/><path d="M963.0 318.0 L1154.0 186.0 L1154.0 450.5 L963.0 583.0Z" fill="#964f0d" stroke="#964f0d" stroke-width="0.7"/><path d="M716 481.5L963 583L1154 450.5" stroke="#00ff00" stroke-width="1" stroke-dasharray="1.5 2" fill="none" opacity="0.8"/><defs>
<radialGradient id="pg" cx="0.32" cy="0.3" r="0.85" fx="0.3" fy="0.3">
<stop offset="0" stop-color="#40ff40"/><stop offset="0.35" stop-color="#00c800"/><stop offset="0.7" stop-color="#009a00"/><stop offset="0.9" stop-color="#006c00"/><stop offset="1" stop-color="#004800"/></radialGradient>
<radialGradient id="pgt" cx="0.32" cy="0.42" r="0.8" fx="0.3" fy="0.45">
<stop offset="0" stop-color="#40ff40"/><stop offset="0.35" stop-color="#00c800"/><stop offset="0.72" stop-color="#00a000"/><stop offset="0.92" stop-color="#007000"/><stop offset="1" stop-color="#005000"/></radialGradient>
<radialGradient id="hl" cx="0.5" cy="0.5" r="0.5">
<stop offset="0" stop-color="#f4fff4" stop-opacity="1"/><stop offset="0.22" stop-color="#c0ffc0" stop-opacity="0.95"/><stop offset="0.5" stop-color="#50ff50" stop-opacity="0.7"/><stop offset="0.8" stop-color="#30f030" stop-opacity="0.25"/><stop offset="1" stop-color="#20ff20" stop-opacity="0"/></radialGradient>
<radialGradient id="pg2" cx="0.5" cy="0.5" r="0.5">
<stop offset="0" stop-color="#a0ffa0" stop-opacity="0.9"/><stop offset="0.5" stop-color="#60ff60" stop-opacity="0.5"/><stop offset="1" stop-color="#40ff40" stop-opacity="0"/></radialGradient>
<radialGradient id="shadow" cx="0.5" cy="0.5" r="0.5">
<stop offset="0" stop-color="#101418" stop-opacity="0.75"/><stop offset="1" stop-color="#101418" stop-opacity="0"/></radialGradient>
<linearGradient id="vcf" x1="0" y1="0" x2="0" y2="1"><stop offset="0" stop-color="#bcbec1"/><stop offset="1" stop-color="#a9abae"/></linearGradient>
<linearGradient id="vcr" x1="0" y1="0" x2="0" y2="1"><stop offset="0" stop-color="#b6b8bb"/><stop offset="1" stop-color="#a5a7aa"/></linearGradient>
</defs><clipPath id="cp0"><path d="M904 201C904 186 912 175 922 171Q935 167.5 948 171C958 175 966 186 966 201C966 212 952 218 935 218C918 218 904 212 904 201Z"/></clipPath><path d="M904 201C904 186 912 175 922 171Q935 167.5 948 171C958 175 966 186 966 201C966 212 952 218 935 218C918 218 904 212 904 201Z" fill="url(#pgt)"/><g clip-path="url(#cp0)"><ellipse cx="925" cy="192" rx="17" ry="15" fill="url(#hl)"/><ellipse cx="950" cy="206" rx="11" ry="9" fill="url(#pg2)"/></g><clipPath id="cp1"><path d="M1116.0 255.8C1128.0 256.0 1138.0 269.0 1138.0 285.3C1138.0 299.0 1126.0 315.2 1108.0 315.2C1096.0 315.2 1087.5 306.0 1087.5 294.2C1087.5 276.0 1100.0 256.0 1116.0 255.8Z"/></clipPath><path d="M1116.0 255.8C1128.0 256.0 1138.0 269.0 1138.0 285.3C1138.0 299.0 1126.0 315.2 1108.0 315.2C1096.0 315.2 1087.5 306.0 1087.5 294.2C1087.5 276.0 1100.0 256.0 1116.0 255.8Z" fill="url(#pg)"/><g clip-path="url(#cp1)"><ellipse cx="1097.0" cy="276.0" rx="14" ry="15" fill="url(#hl)"/><ellipse cx="1122.0" cy="292.0" rx="11" ry="12" fill="url(#pg2)"/></g><clipPath id="cp2"><path d="M1020.5 321.8C1032.5 322.0 1042.5 335.0 1042.5 351.3C1042.5 365.0 1030.5 381.2 1012.5 381.2C1000.5 381.2 992.0 372.0 992.0 360.2C992.0 342.0 1004.5 322.0 1020.5 321.8Z"/></clipPath><path d="M1020.5 321.8C1032.5 322.0 1042.5 335.0 1042.5 351.3C1042.5 365.0 1030.5 381.2 1012.5 381.2C1000.5 381.2 992.0 372.0 992.0 360.2C992.0 342.0 1004.5 322.0 1020.5 321.8Z" fill="url(#pg)"/><g clip-path="url(#cp2)"><ellipse cx="1001.5" cy="342.0" rx="14" ry="15" fill="url(#hl)"/><ellipse cx="1026.5" cy="358.0" rx="11" ry="12" fill="url(#pg2)"/></g><clipPath id="cp3"><path d="M1116.0 388.8C1128.0 389.0 1138.0 402.0 1138.0 418.3C1138.0 432.0 1126.0 448.2 1108.0 448.2C1096.0 448.2 1087.5 439.0 1087.5 427.2C1087.5 409.0 1100.0 389.0 1116.0 388.8Z"/></clipPath><path d="M1116.0 388.8C1128.0 389.0 1138.0 402.0 1138.0 418.3C1138.0 432.0 1126.0 448.2 1108.0 448.2C1096.0 448.2 1087.5 439.0 1087.5 427.2C1087.5 409.0 1100.0 389.0 1116.0 388.8Z" fill="url(#pg)"/><g clip-path="url(#cp3)"><ellipse cx="1097.0" cy="409.0" rx="14" ry="15" fill="url(#hl)"/><ellipse cx="1122.0" cy="425.0" rx="11" ry="12" fill="url(#pg2)"/></g><clipPath id="cp4"><path d="M1020.5 454.8C1032.5 455.0 1042.5 468.0 1042.5 484.3C1042.5 498.0 1030.5 514.2 1012.5 514.2C1000.5 514.2 992.0 505.0 992.0 493.2C992.0 475.0 1004.5 455.0 1020.5 454.8Z"/></clipPath><path d="M1020.5 454.8C1032.5 455.0 1042.5 468.0 1042.5 484.3C1042.5 498.0 1030.5 514.2 1012.5 514.2C1000.5 514.2 992.0 505.0 992.0 493.2C992.0 475.0 1004.5 455.0 1020.5 454.8Z" fill="url(#pg)"/><g clip-path="url(#cp4)"><ellipse cx="1001.5" cy="475.0" rx="14" ry="15" fill="url(#hl)"/><ellipse cx="1026.5" cy="491.0" rx="11" ry="12" fill="url(#pg2)"/></g><path d="M716 483L719 453" stroke="none"/><path d="M718 479L754.5 456" stroke="#087808" stroke-width="6.2"/><path d="M720 478.5L754 457.5" stroke="#2a8a2a" stroke-width="1.2"/><path d="M715 482.5L764.5 501" stroke="#a8101e" stroke-width="6"/><path d="M716 481.5L763 499.29999999999995" stroke="#e04050" stroke-width="3"/><path d="M717 481.29999999999995L762 498.5" stroke="#ffb0b0" stroke-width="1.1"/><rect x="712" y="428.5" width="7" height="55" fill="#003a90"/><rect x="716.5" y="430" width="1.3" height="52" fill="#4a7ad0"/><ellipse cx="715.5" cy="430" rx="3.5" ry="2" fill="#4a8ae0"/><path d="M713 409.5H729L713.5 424.5H728" stroke="#1e70f0" stroke-width="1.2" fill="none"/><path d="M750 435.5L757.5 442L765 435.5M757.5 442V450" stroke="#10b010" stroke-width="1.1" fill="none"/><path d="M760.5 481L775 495M775 481L760.5 495" stroke="#f02030" stroke-width="1.1" fill="none"/><ellipse cx="1823" cy="148" rx="48" ry="24" fill="url(#shadow)"/><path fill-rule="evenodd" d="M1757.5 144A65.5 37.6 0 1 0 1888.5 144A65.5 37.6 0 1 0 1757.5 144Z M1771 144A52 25.8 0 1 0 1875 144A52 25.8 0 1 0 1771 144Z" fill="#4a5059"/><text x="0" y="5.8" text-anchor="middle" font-family="Liberation Sans" font-weight="bold" font-size="16" fill="#a3a7ad" stroke="#a3a7ad" stroke-width="0.9" transform="translate(1778.0 116.0) rotate(-27) scale(1.15 0.85)">W</text><text x="0" y="7.2" text-anchor="middle" font-family="Liberation Sans" font-weight="bold" font-size="20" fill="#a3a7ad" stroke="#a3a7ad" stroke-width="0.9" transform="translate(1781.0 168.5) rotate(24) scale(1.15 0.85)">S</text><text x="0" y="6.8" text-anchor="middle" font-family="Liberation Sans" font-weight="bold" font-size="19" fill="#a3a7ad" stroke="#a3a7ad" stroke-width="0.9" transform="translate(1875.3 160.5) rotate(-30) scale(1.15 0.85)">E</text><path d="M1859 113.5L1866 107.5" stroke="#a3a7ad" stroke-width="2.4"/><path d="M1818.3 75.5L1858.5 89.69999999999999L1828 107.80000000000001L1786.5 93.19999999999999Z" fill="#b5b7ba"/><path d="M1786.5 93.19999999999999L1828 107.80000000000001L1827.4 154.5L1789 135.7Z" fill="url(#vcf)"/><path d="M1828 107.80000000000001L1858.5 89.69999999999999L1856.7 129.39999999999998L1827.4 154.5Z" fill="url(#vcr)"/><path d="M1787 93.39999999999998L1828 107.80000000000001L1858.5 89.69999999999999M1828 107.80000000000001L1827.4 154.5" stroke="#6a6e74" stroke-width="0.8" stroke-dasharray="3 3" fill="none"/><path d="M1821 105L1826 103L1832 106L1832 112.5L1827 115L1821 112Z" fill="#c4c8ce" opacity="0.7"/><g fill="#6c7077" font-family="Liberation Sans" font-weight="bold" text-anchor="middle"><text x="48" y="63" font-size="23" stroke="#6c7077" stroke-width="0.6" transform="matrix(0.415 0.146 0.025 0.425 1786.5 93.19999999999999)">FRONT</text><text x="50" y="60" font-size="22" stroke="#6c7077" stroke-width="0.6" transform="matrix(0.305 -0.181 -0.006 0.467 1828 107.80000000000001)">RIGHT</text><text x="52" y="60" font-size="24" transform="matrix(0.402 0.142 -0.318 0.177 1818.3 75.5)">TOP</text></g><g stroke="#15191f" stroke-width="1.2"><rect x="1834" y="17" width="13" height="5" fill="#e8e8e8"/><rect x="1862" y="10.5" width="10" height="10" fill="#b8b8b8"/><rect x="1859" y="13" width="10" height="10" fill="#ececec"/><rect x="1862" y="16" width="4" height="4" fill="#15191f"/></g><path d="M1885 12L1894 21M1894 12L1885 21" stroke="#15191f" stroke-width="4.4"/><path d="M1885 12L1894 21M1894 12L1885 21" stroke="#ececec" stroke-width="2.6"/><rect x="1794.5" y="205" width="55.5" height="20" rx="5.5" fill="#9ea2ab"/><text x="1798" y="219.5" font-family="Liberation Sans" font-size="12.5" fill="#6c7078">WCS</text><path d="M1835.5 211.5H1845L1840.2 217Z" fill="#b0b4bc" stroke="#8a8e96" stroke-width="0.7"/><rect x="1865.3" y="256.3" width="39.4" height="258.5" rx="4" fill="#5b6068"/><circle cx="1897" cy="262" r="3.8" fill="#6a6f76" stroke="#474b52" stroke-width="0.8"/><path d="M1895 260L1899 264M1899 260L1895 264" stroke="#474b52" stroke-width="0.8"/><g fill="none" stroke="#474b52" stroke-width="2"><path d="M1898 291A13 13 0 1 1 1885 278H1894Q1898 278 1898 282Z"/><circle cx="1884.5" cy="290.8" r="7"/><path d="M1879 295L1874.5 299.5M1890 295L1894.5 299.5"/></g><path d="M1882 314.5H1888L1885 317.5Z" fill="#474b52"/><path d="M1868 324.5H1902" stroke="#51565d" stroke-width="1"/><path d="M1873 347Q1876 345 1879 348L1878 335Q1878 331 1880.5 332L1882 342L1883 330Q1885 328 1886.5 330L1886.5 342L1889 331Q1891 330 1892 332L1891 344L1894 335Q1896 334 1896.5 337L1893 352Q1891 357 1885 357Q1880 357 1877 352Z" fill="none" stroke="#474b52" stroke-width="1.8"/><g fill="none" stroke="#474b52" stroke-width="1.8"><path d="M1871 364L1887 380M1885 364L1871 378"/><path d="M1871 368V364H1875M1881.5 364H1885.5V368M1871 374V378H1875"/><circle cx="1890" cy="382" r="4.6"/><path d="M1893.5 385.5L1897 389" stroke-width="2.2"/></g><path d="M1882 402H1888L1885 405Z" fill="#474b52"/><g fill="none" stroke="#474b52" stroke-width="1.8"><ellipse cx="1884.5" cy="427" rx="13" ry="5"/><path d="M1882.5 436V417H1880L1885 411.5L1890 417H1887.5V436Z" fill="#5b6068"/><path d="M1875 429.5L1872 432L1876 433.5"/></g><path d="M1882 449H1888L1885 452Z" fill="#474b52"/><path d="M1868 458.5H1902" stroke="#51565d" stroke-width="1"/><g fill="none" stroke="#474b52" stroke-width="1.2"><rect x="1870.5" y="463.5" width="7.5" height="7.5"/><rect x="1880" y="463.5" width="7.5" height="7.5"/><rect x="1889.5" y="463.5" width="7.5" height="7.5"/><rect x="1870.5" y="474" width="20" height="17.5"/></g><path d="M1876.5 477L1885.5 482.70000000000005L1876.5 488.5Z" fill="#474b52"/><circle cx="1898" cy="508" r="3.8" fill="#666b72" stroke="#474b52" stroke-width="0.8"/><path d="M1896 507H1900L1898 509.5Z" fill="#474b52"/></svg>
<div id="t48" class="t" style="left:6.0px;top:195.90px;font-size:15px;line-height:15px;color:#dadde1;font-weight:normal;transform:scaleX(0.9731);text-shadow:1px 0 #181c22,-1px 0 #181c22,0 1px #181c22,0 -1px #181c22;">[&#8202;−&#8202;][Custom View][Shaded (Fast)]</div>
<div style="position:absolute;left:1910px;top:0px;width:1px;height:897px;background:#1e9ad8;"></div>
<div style="position:absolute;left:1911px;top:0px;width:1px;height:897px;background:#8aa4b2;"></div>
</body></html>
